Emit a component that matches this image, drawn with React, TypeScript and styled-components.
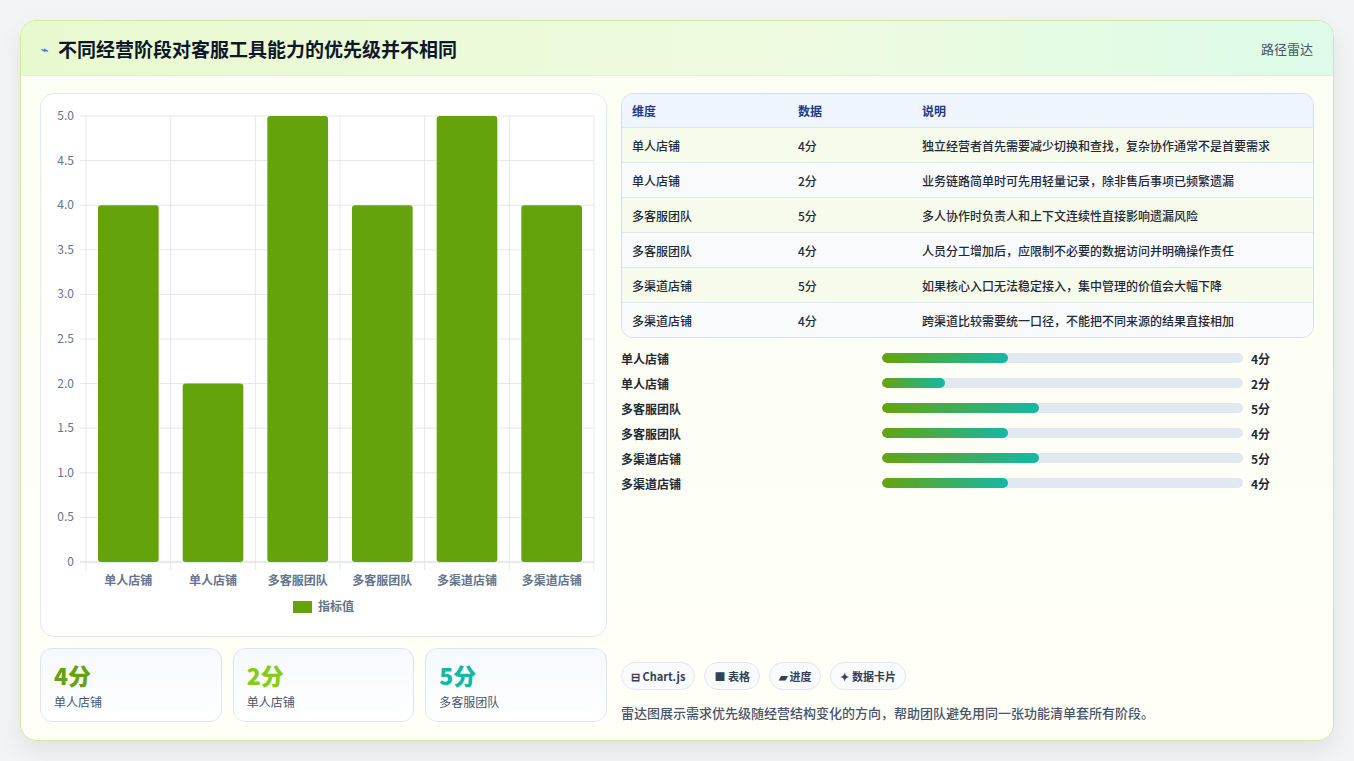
import React from "react";
import styled, { createGlobalStyle } from "styled-components";

const Global = createGlobalStyle`
  html, body { margin: 0; padding: 0; background: #f3f4f6; }
  body { font-family: "Noto Sans CJK SC", "Noto Sans", sans-serif; }
  * { box-sizing: border-box; }
`;

const Page = styled.div`
  width: 1354px; height: 761px; padding: 20px 20px 0 20px;
`;
const Card = styled.div`
  width: 1314px; height: 721px; border: 1px solid #cde9a0; border-radius: 16px;
  background: linear-gradient(180deg, #fbfef2 0%, #fffff8 100%);
  box-shadow: 0 10px 24px rgba(0,0,0,0.08); overflow: hidden;
  display: flex; flex-direction: column;
`;
const Header = styled.div`
  height: 55px; flex: none; display: flex; align-items: center; justify-content: space-between;
  padding: 0 20px; border-bottom: 1px solid #e4efd6;
  background: linear-gradient(90deg, #e8f9cf 0%, #eefbe0 60%, #dcfbe8 100%);
`;
const Title = styled.h1`
  margin: 0; font-size: 19px; font-weight: 700; color: #0f172a; display: flex; align-items: center; gap: 10px;
`;
const Tag = styled.span` font-size: 13px; color: #475569; `;
const Body = styled.div`
  flex: 1; display: grid; grid-template-columns: 567px 693px; gap: 14px; padding: 17px 19px 18px 19px;
`;
const Col = styled.div` display: flex; flex-direction: column; `;
const ChartBox = styled.div`
  height: 544px; background: #fff; border: 1px solid #e2e8f0; border-radius: 14px;
`;
const Stats = styled.div` display: grid; grid-template-columns: repeat(3, 1fr); gap: 11px; margin-top: 11px; `;
const Stat = styled.div`
  height: 74px; border: 1px solid #dbe6f1; border-radius: 12px; padding: 12px 13px;
  background: linear-gradient(180deg, #f5f9fd, #ffffff);
`;
const StatVal = styled.div<{ $c: string }>` font-size: 23px; font-weight: 800; color: ${p => p.$c}; line-height: 28px; `;
const StatLbl = styled.div` font-size: 12px; color: #475569; margin-top: 4px; `;
const Table = styled.div`
  border: 1px solid #d5dde8; border-radius: 12px; overflow: hidden; background: #fff;
`;
const Row = styled.div<{ $bg: string; $head?: boolean }>`
  display: grid; grid-template-columns: 166px 124px 1fr; height: ${p => p.$head ? 33 : 35}px; align-items: center;
  padding: 0 10px; background: ${p => p.$bg}; font-size: 12px; font-weight: ${p => p.$head ? 600 : 500};
  color: ${p => p.$head ? "#1e3a8a" : "#1f2937"};
  border-top: ${p => p.$head ? "none" : "1px solid #e2e8f0"};
`;
const Bars = styled.div` display: flex; flex-direction: column; gap: 7px; margin-top: 11px; `;
const BarRow = styled.div` display: grid; grid-template-columns: 261px 361px 1fr; align-items: center; height: 18px; font-size: 12px; font-weight: 600; color: #1f2937; `;
const Track = styled.div` height: 10px; border-radius: 5px; background: #e2e8f0; overflow: hidden; `;
const Fill = styled.div` height: 100%; border-radius: 5px; background: linear-gradient(90deg, #65a30d, #14b8a6); `;
const BarVal = styled.span` padding-left: 8px; `;
const Spacer = styled.div` flex: 1; `;
const Chips = styled.div` display: flex; gap: 9px; `;
const Chip = styled.span`
  height: 28px; padding: 0 9px; border: 1px solid #e2e8f0; border-radius: 14px; background: #f8fafc;
  font-size: 11px; font-weight: 600; color: #334155; display: flex; align-items: center; gap: 3px;
`;
const Caption = styled.p` margin: 13px 0 0; font-size: 13px; color: #475569; font-weight: 500; `;

const cats = ["单人店铺", "单人店铺", "多客服团队", "多客服团队", "多渠道店铺", "多渠道店铺"];
const vals = [4, 2, 5, 4, 5, 4];
const notes = [
  "独立经营者首先需要减少切换和查找，复杂协作通常不是首要需求",
  "业务链路简单时可先用轻量记录，除非售后事项已频繁遗漏",
  "多人协作时负责人和上下文连续性直接影响遗漏风险",
  "人员分工增加后，应限制不必要的数据访问并明确操作责任",
  "如果核心入口无法稳定接入，集中管理的价值会大幅下降",
  "跨渠道比较需要统一口径，不能把不同来源的结果直接相加",
];

function Chart() {
  const x0 = 45, x1 = 553, y0 = 22, y1 = 468;
  const cw = (x1 - x0) / 6;
  const ticks = [0, 0.5, 1, 1.5, 2, 2.5, 3, 3.5, 4, 4.5, 5];
  const yv = (v: number) => y1 - (v / 5) * (y1 - y0);
  return (
    <svg width="566" height="542" fontFamily="'Noto Sans CJK SC', sans-serif">
      {ticks.map(t => (
        <g key={t}>
          <line x1={x0 - 6} x2={x1} y1={yv(t)} y2={yv(t)} stroke={t === 0 ? "#cbd5e1" : "#e5e7eb"} />
          <text x={x0 - 12} y={yv(t) + 4} textAnchor="end" fontSize="12" fill="#64748b">{t === 0 ? "0" : t.toFixed(1)}</text>
        </g>
      ))}
      {Array.from({ length: 7 }).map((_, i) => (
        <line key={i} x1={x0 + i * cw} x2={x0 + i * cw} y1={y0} y2={y1 + 8} stroke="#e5e7eb" />
      ))}
      {vals.map((v, i) => (
        <g key={i}>
          <rect x={x0 + i * cw + 12} y={yv(v)} width={cw - 24} height={y1 - yv(v)} rx="3" fill="#65a30d" />
          <text x={x0 + i * cw + cw / 2} y={y1 + 23} textAnchor="middle" fontSize="12" fontWeight="600" fill="#64748b">{cats[i]}</text>
        </g>
      ))}
      <rect x="252" y="507" width="19" height="12" fill="#65a30d" />
      <text x="277" y="517" fontSize="12" fontWeight="600" fill="#64748b">指标值</text>
    </svg>
  );
}

export default function App() {
  return (
    <Page>
      <Global />
      <Card>
        <Header>
          <Title><span style={{ color: "#3b82f6", fontSize: 12 }}>⌁</span>不同经营阶段对客服工具能力的优先级并不相同</Title>
          <Tag>路径雷达</Tag>
        </Header>
        <Body>
          <Col>
            <ChartBox><Chart /></ChartBox>
            <Stats>
              <Stat><StatVal $c="#65a30d">4分</StatVal><StatLbl>单人店铺</StatLbl></Stat>
              <Stat><StatVal $c="#84cc16">2分</StatVal><StatLbl>单人店铺</StatLbl></Stat>
              <Stat><StatVal $c="#14b8a6">5分</StatVal><StatLbl>多客服团队</StatLbl></Stat>
            </Stats>
          </Col>
          <Col>
            <Table>
              <Row $head $bg="#eef5fd"><span>维度</span><span>数据</span><span>说明</span></Row>
              {cats.map((c, i) => (
                <Row key={i} $bg={i % 2 === 0 ? "#f7fbec" : "#f8fafc"}>
                  <span>{c}</span><span>{vals[i]}分</span><span>{notes[i]}</span>
                </Row>
              ))}
            </Table>
            <Bars>
              {cats.map((c, i) => (
                <BarRow key={i}>
                  <span>{c}</span>
                  <Track><Fill style={{ width: `${vals[i] * 8.7}%` }} /></Track>
                  <BarVal>{vals[i]}分</BarVal>
                </BarRow>
              ))}
            </Bars>
            <Spacer />
            <Chips>
              <Chip>⊟ Chart.js</Chip>
              <Chip>■ 表格</Chip>
              <Chip>▰ 进度</Chip>
              <Chip>✦ 数据卡片</Chip>
            </Chips>
            <Caption>雷达图展示需求优先级随经营结构变化的方向，帮助团队避免用同一张功能清单套所有阶段。</Caption>
          </Col>
        </Body>
      </Card>
    </Page>
  );
}
